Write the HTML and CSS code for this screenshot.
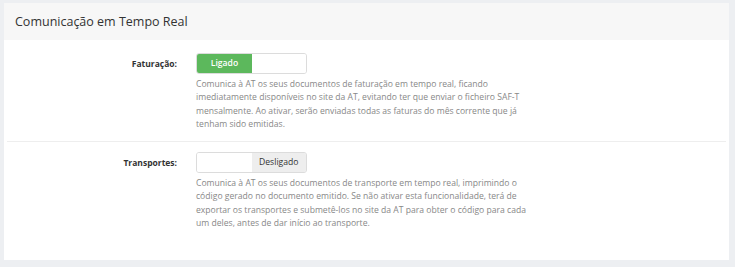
FILE: index.html
```html
<!DOCTYPE html>
<html lang="pt">
<head>
<meta charset="utf-8">
<title>Comunicação em Tempo Real</title>
<link rel="stylesheet" href="styles.css">
</head>
<body>
<div class="panel">
  <div class="panel-heading">Comunicação em Tempo Real</div>
  <div class="panel-body">
    <div class="row">
      <div class="label">Faturação:</div>
      <div class="field">
        <div class="toggle on"><span class="part active">Ligado</span><span class="part blank"></span></div>
        <p class="help">Comunica à AT os seus documentos de faturação em tempo real, ficando imediatamente disponíveis no site da AT, evitando ter que enviar o ficheiro SAF-T mensalmente. Ao ativar, serão enviadas todas as faturas do mês corrente que já tenham sido emitidas.</p>
      </div>
    </div>
    <div class="row">
      <div class="label">Transportes:</div>
      <div class="field">
        <div class="toggle off"><span class="part blank"></span><span class="part inactive">Desligado</span></div>
        <p class="help">Comunica à AT os seus documentos de transporte em tempo real, imprimindo o código gerado no documento emitido. Se não ativar esta funcionalidade, terá de exportar os transportes e submetê-los no site da AT para obter o código para cada um deles, antes de dar início ao transporte.</p>
      </div>
    </div>
  </div>
</div>
</body>
</html>
```

FILE: styles.css
```css
html, body {
  margin: 0;
  padding: 0;
}
body {
  background: #edeff2;
  font-family: "Open Sans", "Noto Sans", sans-serif;
  color: #333;
  width: 735px;
  height: 267px;
  overflow: hidden;
}
.panel {
  margin: 3px 6px 0 4px;
  background: #fff;
  height: 257px;
  box-sizing: border-box;
}
.panel-heading {
  background: #f7f7f7;
  height: 37px;
  box-sizing: border-box;
  padding: 10px 0 0 11px;
  font-size: 12.5px;
  line-height: 18px;
  color: #333;
}
.panel-body {
  padding: 13px 3px 0 3px;
}
.row {
  display: flex;
  gap: 19px;
  padding-bottom: 10px;
}
.row + .row {
  border-top: 1px solid #eeeeee;
  padding-top: 10px;
}
.label {
  width: 170px;
  text-align: right;
  font-weight: bold;
  font-size: 8.5px;
  line-height: 21px;
  color: #333;
}
.field {
  width: 338px;
}
.toggle {
  display: flex;
  width: 111px;
  height: 21px;
  box-sizing: border-box;
  border: 1px solid #dcdcdc;
  border-radius: 3px;
  overflow: hidden;
}
.part {
  width: 55px;
  font-size: 8.6px;
  line-height: 19px;
  text-align: center;
}
.part.blank {
  flex: 1;
  background: #fff;
}
.part.active {
  background: #5cb85c;
  color: #fff;
  font-weight: 600;
}
.part.inactive {
  flex: 1;
  background: #eeeeee;
  color: #333;
}
.help {
  margin: 4px 0 0 0;
  font-size: 8.6px;
  line-height: 13.3px;
  color: #888;
}
```
